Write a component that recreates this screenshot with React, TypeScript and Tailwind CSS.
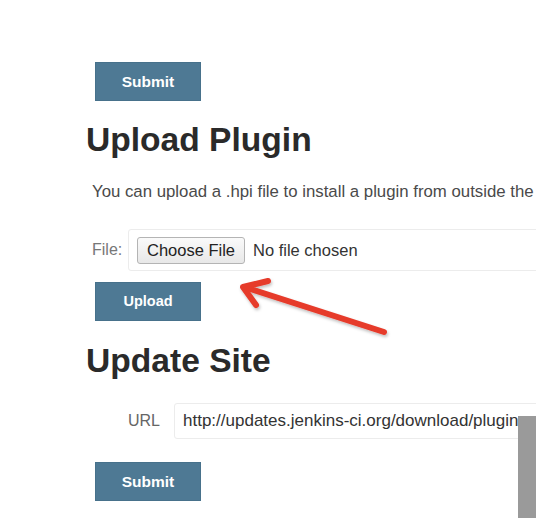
import React from "react";

export default function App() {
  return (
    <div className="relative w-[536px] h-[518px] overflow-hidden bg-white font-['Liberation_Sans',Arial,sans-serif]">
      <div className="flex flex-col pl-[86px] pt-[62px]">
        <button className="ml-[9px] w-[106px] h-[39px] bg-[#4e7994] border border-[#47718b] text-white font-bold text-[15.5px] flex items-center justify-center">
          Submit
        </button>

        <h1 className="mt-[23px] h-[32px] leading-[32px] text-[33.6px] font-bold text-[#2a2a2a] whitespace-nowrap">
          Upload Plugin
        </h1>

        <p className="mt-[26px] ml-[6px] h-[20px] leading-[20px] text-[16.8px] text-[#4a4a4a] whitespace-nowrap">
          You can upload a .hpi file to install a plugin from outside the
        </p>

        <div className="mt-[27px] ml-[6px] flex items-center">
          <span className="w-[36px] shrink-0 text-[16px] text-[#777]">File:</span>
          <div className="w-[500px] shrink-0 h-[42px] border border-[#ececec] rounded-[3px] pl-[8px] flex items-center">
            <span className="w-[108px] shrink-0 h-[27px] rounded-[3px] border border-[#b4b4b4] bg-gradient-to-b from-[#fafafa] to-[#e8e8e8] text-[16.5px] text-[#222] flex items-center justify-center">
              Choose File
            </span>
            <span className="ml-[8px] text-[16.5px] text-[#333] whitespace-nowrap">No file chosen</span>
          </div>
        </div>

        <button className="mt-[11px] ml-[9px] w-[106px] h-[39px] bg-[#4e7994] border border-[#47718b] text-white font-bold text-[14.5px] flex items-center justify-center">
          Upload
        </button>

        <h1 className="mt-[24px] h-[32px] leading-[32px] text-[33.6px] font-bold text-[#2a2a2a] whitespace-nowrap">
          Update Site
        </h1>

        <div className="mt-[26px] ml-[42px] flex items-center">
          <span className="w-[46px] shrink-0 text-[16px] text-[#666]">URL</span>
          <div className="w-[400px] shrink-0 h-[36px] border border-[#ececec] rounded-[3px] pl-[8px] flex items-center">
            <span className="text-[17px] text-[#333] whitespace-nowrap">
              http://updates.jenkins-ci.org/download/plugins
            </span>
          </div>
        </div>

        <button className="mt-[23px] ml-[9px] w-[106px] h-[39px] bg-[#4e7994] border border-[#47718b] text-white font-bold text-[15.5px] flex items-center justify-center">
          Submit
        </button>
      </div>

      <div className="absolute left-[518px] top-[416px] w-[18px] h-[102px] bg-[#9a9a9a]" />

      <svg className="absolute left-0 top-0 pointer-events-none" width="536" height="518" viewBox="0 0 536 518">
        <defs>
          <filter id="sh" x="-20%" y="-20%" width="140%" height="140%">
            <feDropShadow dx="1" dy="2" stdDeviation="1.5" floodColor="#000" floodOpacity="0.25" />
          </filter>
        </defs>
        <g filter="url(#sh)" stroke="#e63b2b" strokeWidth="6" strokeLinecap="round" strokeLinejoin="round" fill="none">
          <path d="M384 332 L244 287" />
          <path d="M268 281 L243 287 L256 305" />
        </g>
      </svg>
    </div>
  );
}
